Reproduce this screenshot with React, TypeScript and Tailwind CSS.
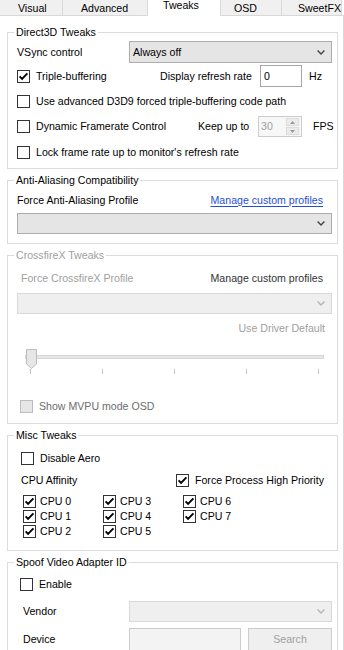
import React from "react";

function Check({ checked, disabled }: { checked?: boolean; disabled?: boolean }) {
  return (
    <span
      className={`flex h-[13px] w-[13px] shrink-0 items-center justify-center border ${
        disabled ? "border-[#bcbcbc] bg-[#e6e6e6]" : "border-[#333333] bg-white"
      }`}
    >
      {checked && (
        <svg width="11" height="11" viewBox="0 0 11 11">
          <path d="M1.6 5.4 L4.1 7.9 L9.4 2.4" fill="none" stroke="#000" strokeWidth="1.9" />
        </svg>
      )}
    </span>
  );
}

function Chevron({ color }: { color: string }) {
  return (
    <svg width="8" height="5" viewBox="0 0 8 5">
      <path d="M0.6 0.6 L4 4 L7.4 0.6" fill="none" stroke={color} strokeWidth="1.4" />
    </svg>
  );
}

function Group({
  title,
  disabled,
  className,
  children,
}: {
  title: string;
  disabled?: boolean;
  className: string;
  children: React.ReactNode;
}) {
  return (
    <div className={`relative ml-[7px] w-[331px] border border-[#dcdcdc] ${className}`}>
      <span
        className={`absolute left-[6px] top-[-7px] bg-white px-[2px] leading-[13px] ${
          disabled ? "text-[#a0a0a0]" : "text-black"
        }`}
      >
        {title}
      </span>
      {children}
    </div>
  );
}

function CheckRow({
  label,
  checked,
  gap = "ml-[6px]",
}: {
  label: string;
  checked?: boolean;
  gap?: string;
}) {
  return (
    <div className="flex items-center">
      <Check checked={checked} />
      <span className={gap}>{label}</span>
    </div>
  );
}

export default function App() {
  return (
    <div className="relative h-[650px] w-[344px] overflow-hidden bg-white text-[10.6px] leading-[13px] text-black font-['Liberation_Sans',Arial,sans-serif]">
      {/* Tab strip */}
      <div className="flex h-[16px]">
        <div className="h-[16px] w-[63px] border-r border-b border-[#d9d9d9] bg-[#f0f0f0] pl-[18px] pt-[2px]">Visual</div>
        <div className="h-[16px] w-[84px] border-b border-[#d9d9d9] bg-[#f0f0f0] pl-[18px] pt-[2px]">Advanced</div>
        <div className="h-[16px] w-[74px] border-x border-[#d9d9d9] bg-white pl-[15px] leading-[11px]">Tweaks</div>
        <div className="h-[16px] w-[61px] border-r border-b border-[#d9d9d9] bg-[#f0f0f0] pl-[13px] pt-[2px]">OSD</div>
        <div className="h-[16px] w-[60px] border-r border-b border-[#d9d9d9] bg-[#f0f0f0] pl-[16px] pt-[2px] overflow-hidden whitespace-nowrap">SweetFX</div>
        <div className="h-[16px] flex-1 border-b border-[#d9d9d9]" />
      </div>

      {/* Tab page */}
      <div className="h-[634px] w-[344px] border-r border-[#d9d9d9] pt-[16px]">
        {/* Direct3D Tweaks */}
        <Group title="Direct3D Tweaks" className="h-[137px]">
          <div className="flex flex-col pl-[9px] pt-[8px]">
            <div className="flex h-[22px] items-center">
              <span className="w-[112px]">VSync control</span>
              <div className="flex h-[22px] w-[203px] items-center justify-between border border-[#adadad] bg-[#e5e5e5] pl-[3px] pr-[6px]">
                <span>Always off</span>
                <Chevron color="#444" />
              </div>
            </div>
            <div className="mt-[2px] flex h-[22px] items-center">
              <div className="flex w-[143px] items-center">
                <Check checked />
                <span className="ml-[6px]">Triple-buffering</span>
              </div>
              <span className="w-[100px]">Display refresh rate</span>
              <div className="flex h-[22px] w-[42px] items-center border border-[#a6a6a6] bg-white pl-[3px]">0</div>
              <span className="ml-[7px]">Hz</span>
            </div>
            <div className="mt-[2px] flex h-[24px] items-center">
              <CheckRow label="Use advanced D3D9 forced triple-buffering code path" />
            </div>
            <div className="mt-[3px] flex h-[21px] items-center">
              <div className="flex w-[181px] items-center">
                <Check />
                <span className="ml-[6px]">Dynamic Framerate Control</span>
              </div>
              <span className="w-[60px]">Keep up to</span>
              <div className="flex h-[21px] w-[44px] items-center justify-between border border-[#cccccc] bg-[#f7f7f7] pl-[2px] pr-[2px] text-[#a0a0a0]">
                <span>30</span>
                <div className="flex h-[17px] w-[13px] flex-col justify-between">
                  <div className="flex h-[8px] items-center justify-center border border-[#dcdcdc] bg-[#ececec]">
                    <svg width="5" height="3" viewBox="0 0 5 3"><path d="M0 3 L2.5 0 L5 3 Z" fill="#9a9a9a" /></svg>
                  </div>
                  <div className="flex h-[8px] items-center justify-center border border-[#dcdcdc] bg-[#ececec]">
                    <svg width="5" height="3" viewBox="0 0 5 3"><path d="M0 0 L2.5 3 L5 0 Z" fill="#9a9a9a" /></svg>
                  </div>
                </div>
              </div>
              <span className="ml-[11px]">FPS</span>
            </div>
            <div className="mt-[4px] flex h-[22px] items-center">
              <CheckRow label="Lock frame rate up to monitor's refresh rate" />
            </div>
          </div>
        </Group>

        {/* Anti-Aliasing */}
        <Group title="Anti-Aliasing Compatibility" className="mt-[11px] h-[64px]">
          <div className="flex flex-col pl-[9px] pt-[12px]">
            <div className="flex h-[14px] w-[306px] items-center justify-between">
              <span>Force Anti-Aliasing Profile</span>
              <span className="text-[#1f4fd6] underline underline-offset-[2px]">Manage custom profiles</span>
            </div>
            <div className="mt-[6px] flex h-[21px] w-[315px] items-center justify-end border border-[#adadad] bg-[#e5e5e5] pr-[6px]">
              <Chevron color="#444" />
            </div>
          </div>
        </Group>

        {/* CrossfireX */}
        <Group title="CrossfireX Tweaks" disabled className="mt-[11px] h-[169px]">
          <div className="flex flex-col pl-[9px] pt-[15px]">
            <div className="flex h-[14px] w-[306px] items-center justify-between">
              <span className="ml-[4px] text-[#a0a0a0]">Force CrossfireX Profile</span>
              <span className="text-[#333333]">Manage custom profiles</span>
            </div>
            <div className="mt-[8px] flex h-[21px] w-[315px] items-center justify-end border border-[#d9d9d9] bg-[#efefef] pr-[6px]">
              <Chevron color="#b5b5b5" />
            </div>
            <div className="mt-[7px] flex h-[14px] w-[315px] items-center justify-end pr-[7px] text-[#a0a0a0]">
              Use Driver Default
            </div>
            <div className="relative mt-[13px] h-[27px] w-[315px]">
              <div className="absolute left-[8px] top-[7px] h-[4px] w-[299px] border border-[#d6d6d6] bg-[#e7e7e7]" />
              <svg className="absolute left-[9px] top-[1px]" width="11" height="20" viewBox="0 0 11 20">
                <path d="M0.5 0.5 H10.5 V15 L5.5 19.5 L0.5 15 Z" fill="#e6e6e6" stroke="#bdbdbd" strokeWidth="1" />
              </svg>
              <div className="absolute left-[13px] top-[21px] h-[5px] w-[1px] bg-[#c4c4c4]" />
              <div className="absolute left-[85px] top-[21px] h-[5px] w-[1px] bg-[#c4c4c4]" />
              <div className="absolute left-[157px] top-[21px] h-[5px] w-[1px] bg-[#c4c4c4]" />
              <div className="absolute left-[229px] top-[21px] h-[5px] w-[1px] bg-[#c4c4c4]" />
              <div className="absolute left-[301px] top-[21px] h-[5px] w-[1px] bg-[#c4c4c4]" />
            </div>
            <div className="mt-[24px] flex h-[14px] items-center pl-[3px]">
              <Check disabled />
              <span className="ml-[6px] text-[#6d6d6d]">Show MVPU mode OSD</span>
            </div>
          </div>
        </Group>

        {/* Misc Tweaks */}
        <Group title="Misc Tweaks" className="mt-[11px] h-[116px]">
          <div className="flex flex-col pl-[9px] pt-[15px]">
            <div className="flex h-[14px] items-center pl-[4px]">
              <Check />
              <span className="ml-[6px]">Disable Aero</span>
            </div>
            <div className="mt-[8px] flex h-[14px] items-center">
              <span className="w-[159px] pl-[4px]">CPU Affinity</span>
              <Check checked />
              <span className="ml-[6px]">Force Process High Priority</span>
            </div>
            <div className="mt-[7px] grid grid-cols-[80px_80px_80px] pl-[6px]">
              {[
                ["CPU 0", "CPU 3", "CPU 6"],
                ["CPU 1", "CPU 4", "CPU 7"],
                ["CPU 2", "CPU 5", ""],
              ].flatMap((row, ri) =>
                row.map((c, ci) => (
                  <div key={`${ri}-${ci}`} className="flex h-[15px] items-center">
                    {c && (
                      <>
                        <Check checked />
                        <span className="ml-[4px]">{c}</span>
                      </>
                    )}
                  </div>
                ))
              )}
            </div>
          </div>
        </Group>

        {/* Spoof Video Adapter ID */}
        <Group title="Spoof Video Adapter ID" className="mt-[11px] h-[110px]">
          <div className="flex flex-col pl-[9px] pt-[14px]">
            <div className="flex h-[14px] items-center pl-[3px]">
              <Check />
              <span className="ml-[6px]">Enable</span>
            </div>
            <div className="mt-[10px] flex h-[21px] items-center">
              <span className="w-[112px] pl-[6px]">Vendor</span>
              <div className="flex h-[21px] w-[203px] items-center justify-end border border-[#d9d9d9] bg-[#efefef] pr-[6px]">
                <Chevron color="#b5b5b5" />
              </div>
            </div>
            <div className="mt-[6px] flex h-[23px] items-center">
              <span className="w-[112px] pl-[6px]">Device</span>
              <div className="h-[23px] w-[112px] border border-[#cccccc] bg-[#f3f3f3]" />
              <div className="ml-[7px] flex h-[23px] w-[84px] items-center justify-center border border-[#cccccc] bg-[#efefef] text-[#a0a0a0]">
                Search
              </div>
            </div>
          </div>
        </Group>
      </div>
    </div>
  );
}
